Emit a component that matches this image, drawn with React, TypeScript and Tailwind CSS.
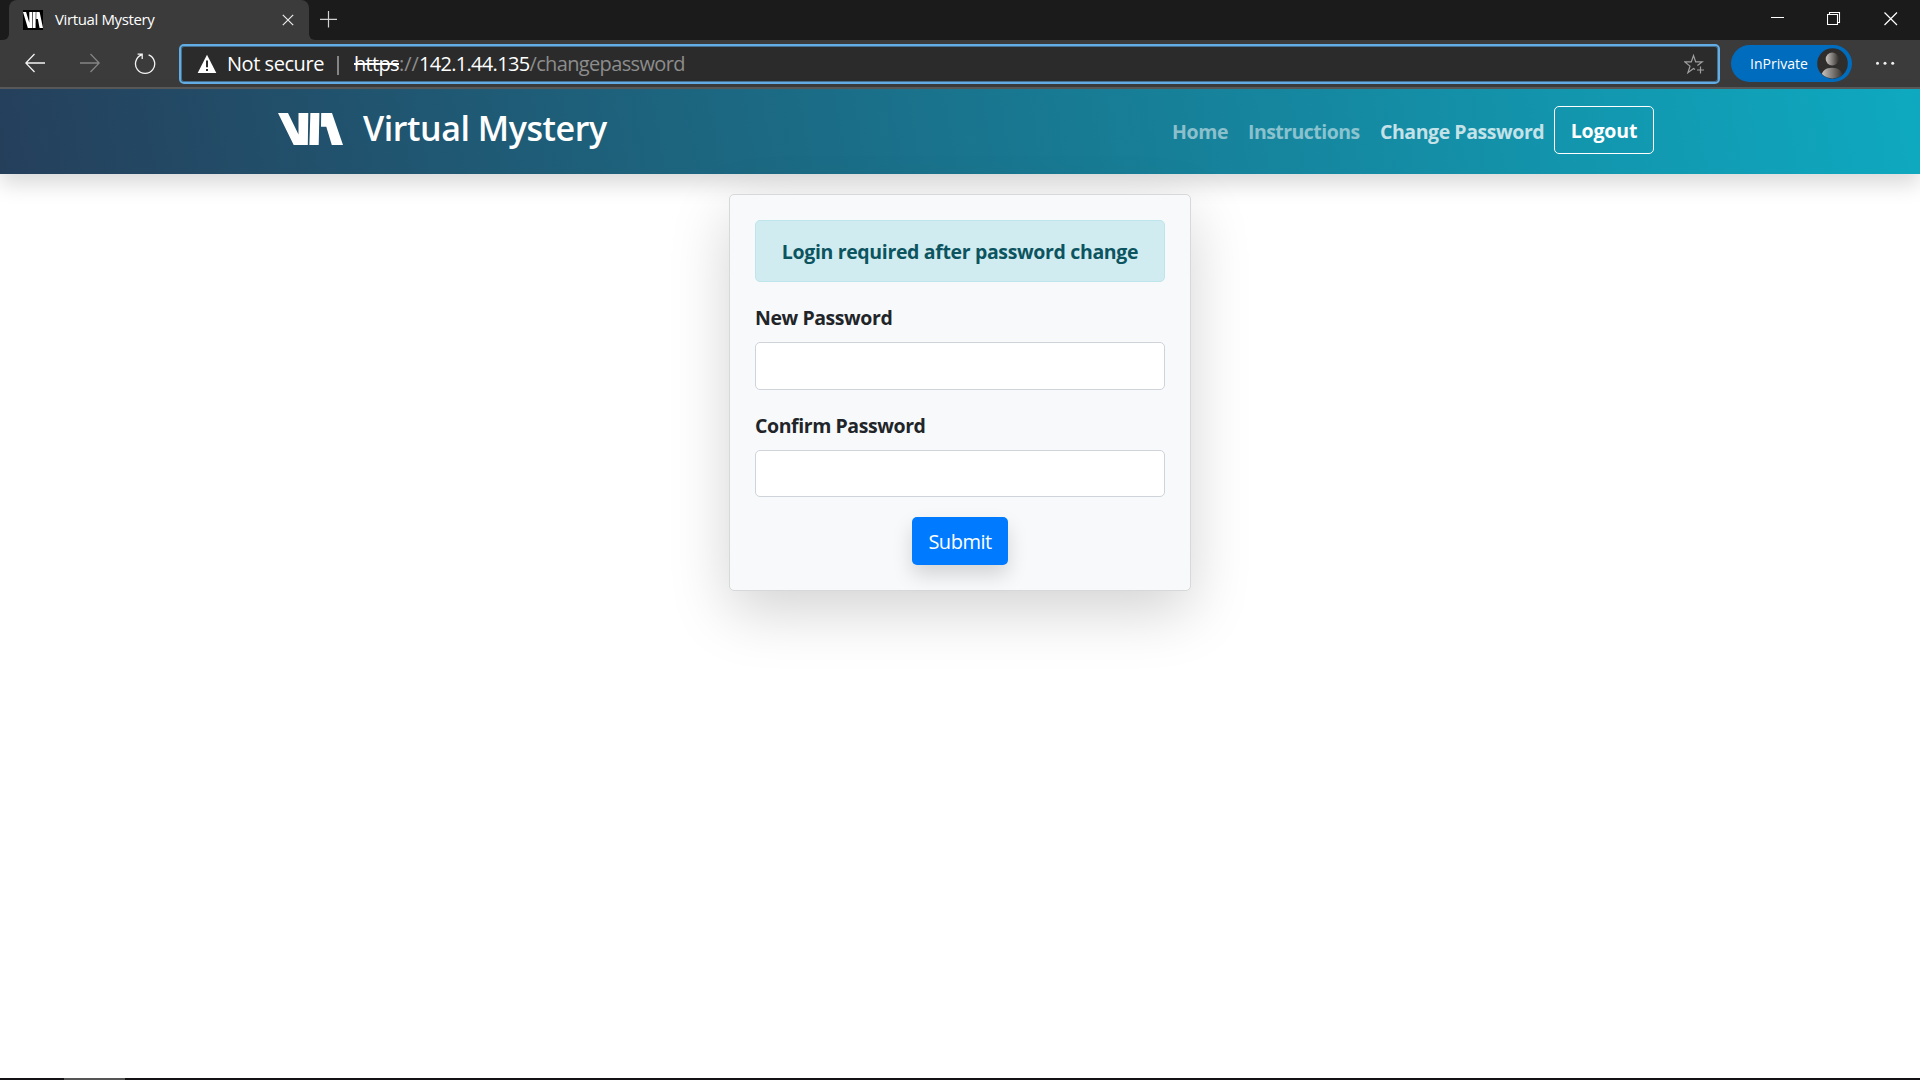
function BrandMark({ className }: { className: string }) {
  return (
    <svg viewBox="0 0 65 32" preserveAspectRatio="none" className={className} fill="#fff">
      <path d="M0 0H10L20.5 21.5V0H30.3L29.8 32H15.7Z" />
      <path d="M32.4 0H41.4L40.7 32H31.4Z" />
      <path d="M43.2 0H54L65 32H53.8L48.3 13.8H43Z" />
    </svg>
  );
}

function TabStrip() {
  return (
    <div className="flex h-10 items-stretch bg-[#1b1b1b]">
      <div className="flex w-[9px] items-end bg-[#3b3b3b]">
        <div className="h-10 w-[9px] rounded-br-[6px] bg-[#1b1b1b]" />
      </div>
      <div className="flex w-[300px] items-center rounded-t-[8px] bg-[#3b3b3b] pl-[14px]">
        <div className="flex h-5 w-5 items-center bg-black">
          <BrandMark className="h-4 w-5" />
        </div>
        <span className="mb-[2px] ml-3 w-[215px] text-[15px] leading-5 tracking-[-0.37px] whitespace-nowrap text-white">
          Virtual Mystery
        </span>
        <svg width="12" height="12" viewBox="0 0 12 12" className="ml-[12px]" stroke="#ececec" strokeWidth="1.2">
          <path d="M0.8 0.8L11.2 11.2M11.2 0.8L0.8 11.2" />
        </svg>
      </div>
      <div className="flex w-[11px] items-end bg-[#3b3b3b]">
        <div className="h-10 w-[11px] rounded-bl-[6px] bg-[#1b1b1b]" />
      </div>
      <svg width="18" height="18" viewBox="0 0 18 18" className="mt-[10px] h-[18px]" stroke="#d2d2d2" strokeWidth="1.2">
        <path d="M8.5 1V17.5M0 9.4H17" />
      </svg>
      <div className="flex-1" />
      <div className="mr-[22px] flex h-[37px] items-center gap-[43px]">
        <svg width="14" height="14" viewBox="0 0 14 14" stroke="#fff">
          <path d="M1 5.5H14" />
        </svg>
        <svg width="14" height="14" viewBox="0 0 14 14" fill="none" stroke="#fff" strokeWidth="1.1">
          <path d="M0.5 2.5H10.5V12.5H0.5Z M2.5 2.5V0.5H12.5V10.5H10.5" />
        </svg>
        <svg width="14" height="14" viewBox="0 0 14 14" stroke="#fff" strokeWidth="1.2">
          <path d="M0.5 0.5L13 13M13 0.5L0.5 13" />
        </svg>
      </div>
    </div>
  );
}

function Toolbar() {
  return (
    <div className="flex h-[49px] border-b-2 border-[#5a5a5a] bg-[#3b3b3b]">
      <div className="flex w-[179px] items-start pt-[13px] pl-[25px]">
        <svg width="20" height="20" viewBox="0 0 20 20" fill="none" stroke="#f4f4f4" strokeWidth="1.3">
          <path d="M20 10H1M9.5 1L0.8 10L9.5 19" />
        </svg>
        <svg width="20" height="20" viewBox="0 0 20 20" className="ml-[35px]" fill="none" stroke="#858585" strokeWidth="1.3">
          <path d="M0 10H19M10.5 1L19.2 10L10.5 19" />
        </svg>
        <svg width="22" height="22" viewBox="0 0 22 22" className="ml-[34px]" fill="none" stroke="#f4f4f4" strokeWidth="1.3">
          <path d="M14.6 1.9A9.6 9.6 0 1 1 7.6 1.9M3.6 1.2H8.2V6" />
        </svg>
      </div>
      <div className="mt-1 flex h-10 w-[1541px] items-start rounded-[5px] border-[2.5px] border-[#63ade5] bg-[#2b2b2b] pt-[2px] shadow-[inset_0_0_0_1px_#46708f]">
        <svg width="20" height="20" viewBox="0 0 20 20" className="mt-[6px] ml-[16px]">
          <path d="M10 0.8L19.3 19H0.7Z" fill="#fff" />
          <path d="M10 6.5V13.3M10 15V17" stroke="#2b2b2b" strokeWidth="2" />
        </svg>
        <span className="mt-px ml-[10px] w-[110px] text-[20px] leading-[30px] tracking-[-0.45px] whitespace-nowrap text-white">
          Not secure
        </span>
        <div className="mt-[8px] h-[19px] w-[2px] bg-[#858585]" />
        <div className="mt-px ml-[15px] flex-1 text-[20px] leading-[30px] whitespace-nowrap text-[#8d8d8d]">
          <span className="tracking-[-0.66px] text-white line-through decoration-2">https</span>
          <span>://</span>
          <span className="tracking-[-0.68px] text-white">142.1.44.135</span>
          <span className="tracking-[-0.64px]">/changepassword</span>
        </div>
        <svg width="21" height="21" viewBox="0 0 21 21" className="mt-[6px] mr-[13px]" fill="none" stroke="#a0a0a0" strokeWidth="1.2">
          <path d="M11 15.6L9.5 14.6L3.9 18.7L6 12.1L0.8 7.9H7.3L9.5 1.5L11.7 7.9H18.2L13.4 11.6" />
          <path d="M16.5 12.5V19.5M13 16H20" />
        </svg>
      </div>
      <div className="mt-[5px] ml-[11px] flex h-[37px] w-[121px] items-center rounded-full bg-[#006cbe] pl-[19px]">
        <span className="w-[67px] text-[14px] leading-5 whitespace-nowrap text-white">InPrivate</span>
        <svg width="31" height="31" viewBox="0 0 31 31">
          <defs>
            <linearGradient id="avatar">
              <stop offset="0.1" stopColor="#bdb9b5" />
              <stop offset="0.95" stopColor="#3a3735" />
            </linearGradient>
            <clipPath id="avatarClip">
              <circle cx="15.5" cy="15.5" r="15" />
            </clipPath>
          </defs>
          <circle cx="15.5" cy="15.5" r="15.3" fill="#302e2d" />
          <circle cx="15.2" cy="11" r="6.5" fill="url(#avatar)" />
          <path d="M4 31C4 22.500 9 19.800 15 19.800S26 22.500 26 31Z" fill="url(#avatar)" clipPath="url(#avatarClip)" />
        </svg>
      </div>
      <svg width="20" height="6" viewBox="0 0 20 6" className="mt-[20px] ml-[23px]" fill="#f0f0f0">
        <circle cx="2.500" cy="3.300" r="1.500" />
        <circle cx="10" cy="3.300" r="1.500" />
        <circle cx="17.700" cy="3.300" r="1.500" />
      </svg>
    </div>
  );
}

function NavBar() {
  return (
    <nav className="flex h-[85px] items-start bg-[linear-gradient(80deg,#253f5b,#0ea9c0)] pl-[278px] font-bold whitespace-nowrap shadow-[0_10px_20px_rgba(0,0,0,0.15)]">
      <BrandMark className="mt-[24px] h-8 w-[65px]" />
      <span className="mt-[14px] ml-[20px] w-[809px] text-[34px] leading-[50px] font-semibold tracking-[-0.45px] text-white">
        Virtual Mystery
      </span>
      <div className="mt-[28px] flex text-[19.5px] leading-[30px] text-white/50">
        <a className="w-[75px] tracking-[-0.35px]">Home</a>
        <a className="w-[133px] pl-px tracking-[-0.54px]">Instructions</a>
        <a className="w-[174px] tracking-[-0.44px] text-white/75">Change Password</a>
      </div>
      <button className="mt-[17px] h-12 w-[100px] rounded-[5px] border border-white pt-[2px] text-[19.5px] leading-[30px] tracking-[-0.15px] text-white">
        Logout
      </button>
    </nav>
  );
}

function PasswordCard() {
  return (
    <form className="flex h-[397px] w-[462px] flex-col rounded-[5px] border border-[#d6d8da] bg-[#f8f9fb] px-[25px] pt-[25px] text-[19.5px] leading-[30px] font-bold whitespace-nowrap text-[#212529] shadow-[0_20px_60px_rgba(0,0,0,0.175)]">
      <div className="flex h-[62px] items-center justify-center rounded-[5px] border border-[#bee5eb] bg-[#d1ecf1] pt-[2px] text-[#0c5460]">
        <span className="tracking-[-0.35px]">Login required after password change</span>
      </div>
      <label className="mt-[21px] tracking-[-0.43px]">New Password</label>
      <input type="password" className="mt-[9px] h-12 rounded-[5px] border border-[#ced4da] bg-white" />
      <label className="mt-[21px] tracking-[-0.42px]">Confirm Password</label>
      <input type="password" className="mt-[9px] h-[47px] rounded-[5px] border border-[#ced4da] bg-white" />
      <button className="mt-5 h-12 w-24 self-center rounded-[5px] bg-[#007bff] pt-[2px] text-[20px] font-normal tracking-[-0.5px] text-white shadow-[0_10px_20px_rgba(0,0,0,0.15)]">
        Submit
      </button>
    </form>
  );
}

export default function App() {
  return (
    <div className="flex h-[1080px] w-[1920px] flex-col overflow-hidden bg-white font-['Open_Sans','Noto_Sans',sans-serif]">
      <TabStrip />
      <Toolbar />
      <NavBar />
      <main className="flex flex-1 items-start justify-center pt-5">
        <PasswordCard />
      </main>
      <div className="flex h-[2px] bg-[#151215] pl-16">
        <div className="h-[2px] w-[61px] bg-[#555]" />
      </div>
    </div>
  );
}
